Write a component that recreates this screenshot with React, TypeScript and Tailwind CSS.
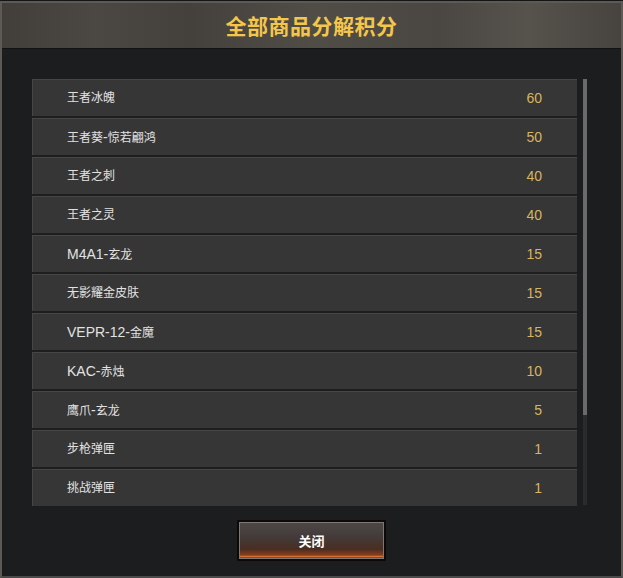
import React from "react";

const items: [string, number][] = [
  ["王者冰魄", 60],
  ["王者葵-惊若翩鸿", 50],
  ["王者之刺", 40],
  ["王者之灵", 40],
  ["M4A1-玄龙", 15],
  ["无影耀金皮肤", 15],
  ["VEPR-12-金魔", 15],
  ["KAC-赤烛", 10],
  ["鹰爪-玄龙", 5],
  ["步枪弹匣", 1],
  ["挑战弹匣", 1],
];

function Name({ text }: { text: string }) {
  const parts = text.match(/[A-Za-z0-9\-]+|[^A-Za-z0-9\-]+/g) || [];
  return (
    <span className="flex items-baseline">
      {parts.map((p, i) =>
        /^[A-Za-z0-9\-]+$/.test(p) ? (
          <span key={i} className="text-[14px]">
            {p}
          </span>
        ) : (
          <span key={i} className="text-[12px]">
            {p}
          </span>
        )
      )}
    </span>
  );
}

export default function App() {
  return (
    <div
      className="w-[623px] h-[578px] flex flex-col bg-[#1b1c1e] border-t border-[#151515]"
      style={{ fontFamily: '"Liberation Sans", "Noto Sans CJK SC", sans-serif' }}
    >
      <div className="flex flex-col flex-1 border-t-2 border-x-2 border-b-2 border-[#5d5a55] border-b-[#4a4a4a]">
        <div className="h-[46px] flex items-center justify-center bg-[linear-gradient(90deg,#423f3b_0%,#4b4843_15%,#44413d_30%,#504d47_50%,#4a4742_70%,#56534d_85%,#47443f_100%)] border-b border-[#111214]">
          <span
            className="text-[21px] font-bold text-[#f4c64a] tracking-[0.5px]"
            style={{ fontFamily: '"Noto Sans CJK SC", sans-serif' }}
          >
            全部商品分解积分
          </span>
        </div>
        <div className="flex-1 flex flex-col bg-[#1c1d1f]">
          <div className="flex pl-[30px] pt-[30px]">
            <div className="w-[545px] flex flex-col bg-[#1e1e1e]">
              {items.map(([name, val], i) => (
                <div
                  key={i}
                  className={`h-[37px] flex items-center justify-between bg-[#363636] border-t border-l border-[#464646] pl-[34px] pr-[35px] ${
                    i < items.length - 1 ? "mb-[2px]" : ""
                  }`}
                >
                  <span className="text-[#e2e2e2]">
                    <Name text={name} />
                  </span>
                  <span className="text-[14px] text-[#d9b45c]">{val}</span>
                </div>
              ))}
            </div>
            <div className="ml-[6px] w-[4px] h-[426px] bg-[#2a2b2d] flex flex-col">
              <div className="h-[336px] bg-[#6a6a6a]" />
            </div>
          </div>
          <div className="flex justify-center pt-[14px]">
            <div className="w-[149px] h-[41px] bg-[#0c0908] p-[2px] rounded-[1px]">
              <div className="w-full h-full border border-[#7d7874] flex items-center justify-center bg-[linear-gradient(180deg,#4c4746_0%,#433b39_40%,#4a2d22_75%,#8a3e1c_92%,#e0763a_96%,#5a2c1c_100%)]">
                <span
                  className="text-[13px] font-bold text-white"
                  style={{ fontFamily: '"Noto Sans CJK SC", sans-serif' }}
                >
                  关闭
                </span>
              </div>
            </div>
          </div>
        </div>
      </div>
    </div>
  );
}
